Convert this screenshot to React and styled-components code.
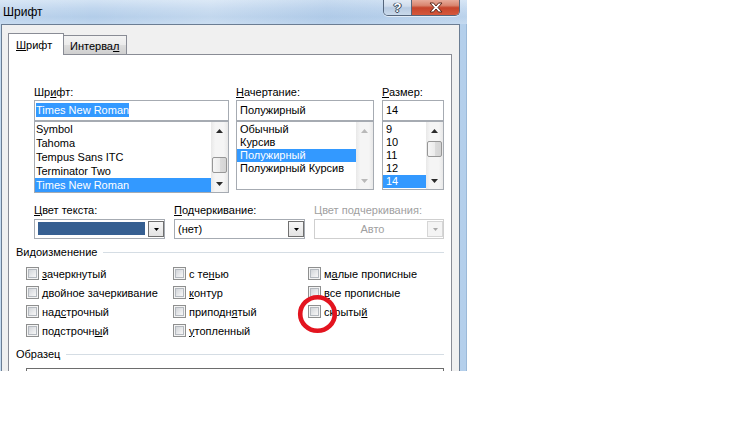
import React from 'react'
import styled, { createGlobalStyle } from 'styled-components'

const GlobalStyle = createGlobalStyle`
  html, body {
    margin: 0;
    padding: 0;
    background: #fff;
  }
  body {
    font-family: "Liberation Sans", Arial, sans-serif;
    font-size: 11px;
    color: #000;
  }
`

const Screen = styled.div`
  position: relative;
  width: 467px;
  height: 371px;
  overflow: hidden;
`

const Window = styled.div`
  display: flex;
  flex-direction: column;
  width: 467px;
`

const TitleBar = styled.div`
  height: 24px;
  display: flex;
  align-items: flex-start;
  justify-content: space-between;
  background:
    linear-gradient(90deg, rgba(255,255,255,0.15) 0%, rgba(255,255,255,0) 20%, rgba(255,255,255,0.2) 45%, rgba(160,190,225,0.2) 70%, rgba(255,255,255,0.1) 100%),
    linear-gradient(180deg, #d3e3f4 0%, #c0d6ee 35%, #b3cde9 70%, #bfd6ee 100%);
`

const Caption = styled.div`
  margin: 5px 0 0 3px;
  font-size: 12px;
  line-height: 14px;
`

const CaptionButtons = styled.div`
  display: flex;
  margin: -1px 7px 0 0;
  border: 1px solid #55667c;
  border-top: none;
  border-radius: 0 0 5px 5px;
  overflow: hidden;
  box-shadow: 0 1px 0 rgba(255,255,255,0.6);
`

const HelpButton = styled.div`
  width: 27px;
  height: 16px;
  display: flex;
  align-items: center;
  justify-content: center;
  border-right: 1px solid #55667c;
  background: linear-gradient(180deg, #e4edf7 0%, #cfdcec 45%, #b8cbe2 55%, #c9d9ea 100%);
  color: #fff;
  font-weight: bold;
  font-size: 13px;
  text-shadow: 0 0 1px #2f3d4f, 0 0 1px #2f3d4f, 1px 0 0 #3e4e63, -1px 0 0 #3e4e63, 0 1px 0 #3e4e63;
`

const CloseButton = styled.div`
  width: 47px;
  height: 16px;
  display: flex;
  align-items: center;
  justify-content: center;
  background: linear-gradient(180deg, #eab2a2 0%, #d98670 40%, #c6452c 55%, #d5583c 100%);
`

const Body = styled.div`
  display: flex;
  background: linear-gradient(90deg, #c6dcf1, #b4cfeb);
`

const Client = styled.div`
  width: 457px;
  min-height: 380px;
  margin-left: 1px;
  display: flex;
  flex-direction: column;
  padding: 8px 7px 0 6px;
  box-sizing: border-box;
  width: 459px;
  background: #f0f0f0;
  border: 1px solid #6b7d93;
  border-bottom: none;
`

const RightFrame = styled.div`
  width: 7px;
  border-right: 1px solid #9bb9d8;
  box-sizing: border-box;
`

const TabStrip = styled.div`
  height: 21px;
  display: flex;
  align-items: flex-end;
`

const Tab = styled.div`
  position: relative;
  box-sizing: border-box;
  border: 1px solid #898c95;
  border-bottom: none;
  line-height: 13px;
  ${p => p.$active ? `
    z-index: 1;
    width: 56px;
    height: 22px;
    margin-bottom: -1px;
    padding: 5px 0 0 7px;
    background: #fff;
  ` : `
    width: 64px;
    height: 19px;
    margin-left: -1px;
    padding: 4px 0 0 6px;
    background: linear-gradient(180deg, #f3f3f3 0%, #ebebeb 50%, #dddddd 51%, #cfcfcf 100%);
  `}
`

const Panel = styled.div`
  background: #fff;
  border: 1px solid #898c95;
  padding: 0 7px 0 7px;
  min-height: 330px;
`

const Hot = styled.span`
  text-decoration: underline;
  text-underline-offset: 1px;
`

const FontsRow = styled.div`
  display: flex;
  align-items: flex-start;
  margin: 31px 0 0 18px;
`

const Column = styled.div`
  width: ${p => p.$w}px;
  flex: none;
  margin-right: ${p => p.$gap || 0}px;
  display: flex;
  flex-direction: column;
`

const FieldLabel = styled.div`
  height: 13px;
  line-height: 13px;
  white-space: nowrap;
  color: ${p => p.$disabled ? '#a0a0a0' : '#000'};
`

const TextField = styled.div`
  margin-top: 1px;
  height: 21px;
  box-sizing: border-box;
  border: 1px solid #a6abb2;
  padding: 2px 0 0 ${p => p.$pad}px;
  line-height: 15px;
  white-space: nowrap;
`

const Selected = styled.span`
  background: #3399ff;
  color: #fff;
  padding: 1px 0;
`

const List = styled.div`
  display: flex;
  height: ${p => p.$h}px;
  box-sizing: border-box;
  border: 1px solid #a6abb2;
  overflow: hidden;
`

const Items = styled.div`
  flex: 1;
  padding-top: ${p => p.$top}px;
  overflow: hidden;
`

const Item = styled.div`
  height: ${p => p.$h}px;
  line-height: ${p => p.$h}px;
  padding-left: ${p => p.$pad}px;
  white-space: nowrap;
  background: ${p => p.$selected ? '#3399ff' : 'transparent'};
  color: ${p => p.$selected ? '#fff' : '#000'};
`

const ScrollBar = styled.div`
  width: 17px;
  flex: none;
  display: flex;
  flex-direction: column;
  background: linear-gradient(90deg, #e8e8e8 0%, #f5f5f5 25%, #f5f5f5 75%, #e8e8e8 100%);
`

const Arrow = styled.div`
  height: 17px;
  flex: none;
  display: flex;
  align-items: center;
  justify-content: center;
`

const Track = styled.div`
  flex: 1;
  display: flex;
  flex-direction: column;
`

const Thumb = styled.div`
  height: 16px;
  margin: ${p => p.$top}px 1px 0 1px;
  box-sizing: border-box;
  border: 1px solid #979797;
  border-radius: 2px;
  background: linear-gradient(90deg, #f6f6f6 0%, #ececec 50%, #dcdcdc 51%, #d4d4d4 100%);
`

const ComboRow = styled.div`
  display: flex;
  margin: 11px 0 0 18px;
`

const Combo = styled.div`
  height: 20px;
  box-sizing: border-box;
  display: flex;
  border: 1px solid ${p => p.$disabled ? '#cfcfcf' : '#a6abb2'};
  margin-top: 2px;
`

const ComboValue = styled.div`
  flex: 1;
  line-height: 18px;
  padding-left: 3px;
  white-space: nowrap;
  text-align: ${p => p.$center ? 'center' : 'left'};
  color: ${p => p.$disabled ? '#a0a0a0' : '#000'};
`

const Swatch = styled.div`
  flex: 1;
  margin: 2px 3px 3px 3px;
  background: #365f91;
`

const DropButton = styled.div`
  width: 16px;
  margin: 1px 0;
  box-sizing: border-box;
  display: flex;
  align-items: center;
  justify-content: center;
  border: 1px solid ${p => p.$disabled ? '#d6d6d6' : '#707070'};
  background: ${p => p.$disabled ? '#f4f4f4' : 'linear-gradient(180deg, #f7f7f7, #e3e3e3)'};
`

const Heading = styled.div`
  display: flex;
  align-items: center;
  height: 13px;
  line-height: 13px;
  margin-top: ${p => p.$top}px;
  white-space: nowrap;

  &::after {
    content: '';
    flex: 1;
    height: 1px;
    margin-left: 6px;
    background: #d5dde4;
  }
`

const CheckGrid = styled.div`
  display: grid;
  grid-template-rows: repeat(4, 19px);
  grid-template-columns: 147px 135px 1fr;
  grid-auto-flow: column;
  margin: 5px 0 0 10px;
`

const CheckRow = styled.div`
  display: flex;
  align-items: center;
  gap: 3px;
  white-space: nowrap;
`

const Box = styled.span`
  position: relative;
  width: 13px;
  height: 13px;
  box-sizing: border-box;
  flex: none;
  border: 1px solid #8e8f8f;
  background: #f4f4f4;

  &::after {
    content: '';
    position: absolute;
    inset: 1px;
    border: 1px solid #b4b9bf;
    background: linear-gradient(135deg, #d2d5d9 0%, #e9eaec 60%, #f7f7f7 100%);
  }
`

const Preview = styled.div`
  height: 60px;
  margin: 7px 0 0 10px;
  border: 1px solid #6d6d6d;
`

const Marker = styled.svg`
  position: absolute;
  left: 296px;
  top: 293px;
`

const hot = (text, i) => [text.slice(0, i), <Hot key="h">{text[i]}</Hot>, text.slice(i + 1)]

const FONTS = ['Symbol', 'Tahoma', 'Tempus Sans ITC', 'Terminator Two', 'Times New Roman']
const STYLES = ['Обычный', 'Курсив', 'Полужирный', 'Полужирный Курсив']
const SIZES = ['9', '10', '11', '12', '14']

const EFFECTS = [
  ['зачеркнутый', 0], ['двойное зачеркивание', 0], ['надстрочный', 3], ['подстрочный', 9],
  ['с тенью', 4], ['контур', 0], ['приподнятый', 7], ['утопленный', 0],
  ['малые прописные', 1], ['все прописные', 0], ['скрытый', 6],
]

const Tri = ({ up, color = '#2b2b2b' }) => (
  <svg width="7" height="4" viewBox="0 0 7 4">
    <polygon points={up ? '3.5,0 7,4 0,4' : '0,0 7,0 3.5,4'} fill={color} />
  </svg>
)

const Scroll = ({ thumb, disabled }) => (
  <ScrollBar>
    <Arrow><Tri up color={disabled ? '#b9b9b9' : '#2b2b2b'} /></Arrow>
    <Track>{thumb !== undefined && <Thumb $top={thumb} />}</Track>
    <Arrow><Tri color={disabled ? '#b9b9b9' : '#2b2b2b'} /></Arrow>
  </ScrollBar>
)

const DropDown = ({ disabled }) => (
  <DropButton $disabled={disabled}>
    <svg width="5" height="3" viewBox="0 0 5 3">
      <polygon points="0,0 5,0 2.5,3" fill={disabled ? '#a8a8a8' : '#000'} />
    </svg>
  </DropButton>
)

const App = () => {
  return (
    <>
      <GlobalStyle />
      <Screen>
        <Window>
          <TitleBar>
            <Caption>Шрифт</Caption>
            <CaptionButtons>
              <HelpButton>?</HelpButton>
              <CloseButton>
                <svg width="14" height="11" viewBox="0 0 14 11">
                  <path
                    d="M1 1 H4.5 L7 4 L9.5 1 H13 L9 5.5 L13 10 H9.5 L7 7 L4.5 10 H1 L5 5.5 Z"
                    fill="#fff"
                    stroke="#5b2a1e"
                    strokeWidth="1"
                    strokeLinejoin="round"
                  />
                </svg>
              </CloseButton>
            </CaptionButtons>
          </TitleBar>

          <Body>
            <Client>
              <TabStrip>
                <Tab $active><Hot>Ш</Hot>рифт</Tab>
                <Tab>Интерва<Hot>л</Hot></Tab>
              </TabStrip>

              <Panel>
                <FontsRow>
                  <Column $w={195} $gap={7}>
                    <FieldLabel>{hot('Шрифт:', 2)}</FieldLabel>
                    <TextField $pad={1}><Selected>Times New Roman</Selected></TextField>
                    <List $h={72}>
                      <Items $top={0}>
                        {FONTS.map(f => (
                          <Item key={f} $h={14} $pad={1} $selected={f === 'Times New Roman'}>{f}</Item>
                        ))}
                      </Items>
                      <Scroll thumb={18} />
                    </List>
                  </Column>

                  <Column $w={138} $gap={8}>
                    <FieldLabel>{hot('Начертание:', 0)}</FieldLabel>
                    <TextField $pad={3}>Полужирный</TextField>
                    <List $h={69}>
                      <Items $top={1}>
                        {STYLES.map(s => (
                          <Item key={s} $h={13} $pad={3} $selected={s === 'Полужирный'}>{s}</Item>
                        ))}
                      </Items>
                      <Scroll disabled />
                    </List>
                  </Column>

                  <Column $w={62}>
                    <FieldLabel>{hot('Размер:', 0)}</FieldLabel>
                    <TextField $pad={3}>14</TextField>
                    <List $h={69}>
                      <Items $top={1}>
                        {SIZES.map(s => (
                          <Item key={s} $h={13} $pad={3} $selected={s === '14'}>{s}</Item>
                        ))}
                      </Items>
                      <Scroll thumb={2} />
                    </List>
                  </Column>
                </FontsRow>

                <ComboRow>
                  <Column $w={131} $gap={9}>
                    <FieldLabel>{hot('Цвет текста:', 0)}</FieldLabel>
                    <Combo>
                      <Swatch />
                      <DropDown />
                    </Combo>
                  </Column>
                  <Column $w={131} $gap={9}>
                    <FieldLabel>{hot('Подчеркивание:', 0)}</FieldLabel>
                    <Combo>
                      <ComboValue>(нет)</ComboValue>
                      <DropDown />
                    </Combo>
                  </Column>
                  <Column $w={130}>
                    <FieldLabel $disabled>Цвет подчеркивания:</FieldLabel>
                    <Combo $disabled>
                      <ComboValue $center $disabled>Авто</ComboValue>
                      <DropDown disabled />
                    </Combo>
                  </Column>
                </ComboRow>

                <Heading $top={7}>Видоизменение</Heading>
                <CheckGrid>
                  {EFFECTS.map(([label, i]) => (
                    <CheckRow key={label}>
                      <Box />
                      <span>{hot(label, i)}</span>
                    </CheckRow>
                  ))}
                </CheckGrid>

                <Heading $top={8}>Образец</Heading>
                <Preview />
              </Panel>
            </Client>
            <RightFrame />
          </Body>
        </Window>

        <Marker width="44" height="44" viewBox="0 0 44 44">
          <ellipse cx="21.5" cy="21" rx="17.3" ry="16.8" fill="none" stroke="#e3141f" strokeWidth="4.6" />
        </Marker>
      </Screen>
    </>
  )
}

export default App
